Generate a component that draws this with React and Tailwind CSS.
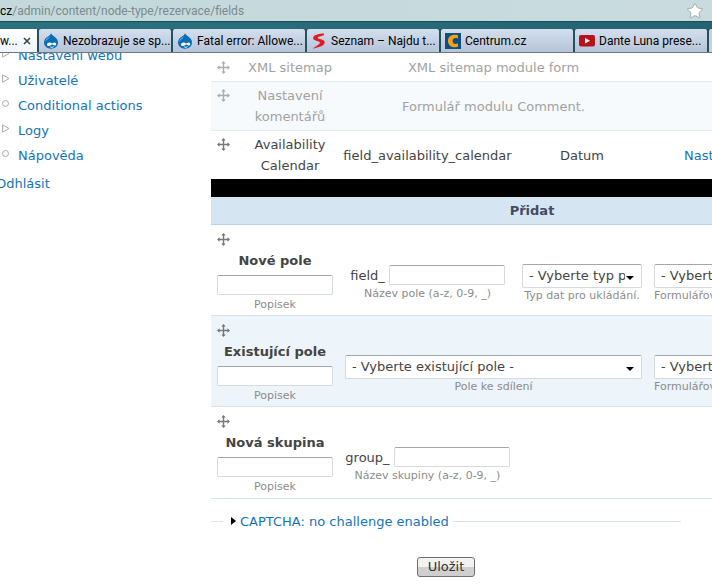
import React from "react";
import { Star } from "lucide-react";

function DrupalIcon() {
  return (
    <svg width="16" height="16" viewBox="0 0 16 16" className="shrink-0" aria-hidden="true">
      <path d="M8 0.3C8.6 1.8 10 2.6 11.6 3.8C13.6 5.3 15 7 15 9.5C15 13.3 11.9 15.7 8 15.7C4.1 15.7 1 13.2 1 9.5C1 7 2.6 5 4.6 3.8C6.2 2.8 7.6 1.9 8 0.3Z" fill="#0b6db5" />
      <path d="M5 4.6C3.2 5.8 2.3 7.2 2.4 8.6C3.4 7 5.6 5.6 7 3.4Z" fill="#5fb2e6" />
      <path d="M4 11.8C4 9.6 6.6 9 8.2 10C9.4 10.7 10.2 9.4 11.8 9.4C13.6 9.4 13.6 12.6 12 12.6C10.8 12.6 10.2 11.4 9.3 11.5C8.2 11.6 7.6 13 6 13C4.8 13 4 12.6 4 11.8Z" fill="#fff" />
      <path d="M7.2 13.8C8.4 14.6 9.8 14.4 10.6 13.6" stroke="#fff" strokeWidth="0.9" fill="none" />
    </svg>
  );
}

function SeznamIcon() {
  return (
    <svg width="16" height="16" viewBox="0 0 16 16" className="shrink-0" aria-hidden="true">
      <path d="M12.6 0.6C9 0.6 3 1.8 2.2 4.4C1.6 6.6 4.2 7.2 7 8.2C9.6 9.2 9.4 10 7.6 11.4C6 12.8 3.6 14 1.8 15.4C6 15 12.8 13.2 13.6 10C14.2 7.4 11.6 6.8 8.8 6C6.2 5.2 6.2 4.6 7.8 3.8C9.2 3.2 11.2 2.8 12.4 2.4C13.2 2 13.4 0.6 12.6 0.6Z" fill="#e01b22" />
    </svg>
  );
}

function CentrumIcon() {
  return (
    <svg width="16" height="16" viewBox="0 0 16 16" className="shrink-0" aria-hidden="true">
      <rect width="16" height="16" fill="#0f4f80" />
      <path d="M13 2.2C8 0.8 3 2.6 3 8C3 13.4 8 15.2 13 13.8V10.6C10 11.6 7.6 10.8 7.6 8C7.6 5.2 10 4.4 13 5.4Z" fill="#f4a118" />
    </svg>
  );
}

function YoutubeIcon() {
  return (
    <svg width="16" height="16" viewBox="0 0 16 16" className="shrink-0" aria-hidden="true">
      <rect y="2" width="16" height="11.5" rx="2" fill="#b5121b" />
      <path d="M6 5L11 7.8L6 10.6Z" fill="#fff" />
    </svg>
  );
}

function DragIcon({ faded }) {
  return (
    <svg
      width="13"
      height="13"
      viewBox="0 0 13 13"
      aria-hidden="true"
      className={faded ? "block shrink-0 opacity-60" : "block shrink-0"}
    >
      <path d="M6.5 1V12M1 6.5H12" stroke="#777" strokeWidth="1.4" />
      <path d="M6.5 0L8.7 2.6H4.3ZM6.5 13L8.7 10.4H4.3ZM0 6.5L2.6 4.3V8.7ZM13 6.5L10.4 4.3V8.7Z" fill="#777" />
    </svg>
  );
}

const tabs = [
  { title: "Nezobrazuje se sp...", Icon: DrupalIcon },
  { title: "Fatal error: Allowe...", Icon: DrupalIcon },
  { title: "Seznam – Najdu t...", Icon: SeznamIcon },
  { title: "Centrum.cz", Icon: CentrumIcon },
  { title: "Dante Luna prese...", Icon: YoutubeIcon },
];

function BrowserBar() {
  return (
    <header className="font-[Roboto,'Open_Sans',sans-serif] text-xs">
      <div className="flex h-[21px] items-center bg-linear-to-r from-[#c3d9db] to-[#c9dbde] text-[#7b8a8d]">
        <div className="flex-1 whitespace-nowrap">
          <span className="text-black">cz</span>/admin/content/node-type/rezervace/fields
        </div>
        <button type="button" aria-label="Oblíbené" className="mr-2">
          <Star size={18} strokeWidth={1} className="fill-white text-[#8d9a9d]" />
        </button>
      </div>
      <div className="h-2 border-t border-[#1c4c56] bg-linear-to-r from-[#2b717d] to-[#246371]" />
      <div className="flex h-6 gap-0.5 overflow-hidden border-b border-[#6b7880] bg-[#22525d]">
        <div className="flex w-[37px] shrink-0 items-center justify-between bg-linear-to-b from-white to-[#edf4fa] pr-1.5">
          <span>w...</span>
          <button type="button" aria-label="Zavřít kartu">
            <svg width="8" height="8" viewBox="0 0 8 8" className="block">
              <path d="M1 1L7 7M7 1L1 7" stroke="#444" strokeWidth="1.6" />
            </svg>
          </button>
        </div>
        {tabs.map(({ title, Icon }) => (
          <button
            key={title}
            type="button"
            className="flex w-[132px] shrink-0 items-center gap-1 rounded-t-xs bg-linear-to-b from-[#d3dfed] to-[#b6c4d8] pl-1 whitespace-nowrap text-black"
          >
            <Icon />
            {title}
          </button>
        ))}
        <div className="w-8 shrink-0 rounded-t-xs bg-[#c5d2e2]" />
      </div>
    </header>
  );
}

const menu = [
  { label: "Nastavení webu", branch: true },
  { label: "Uživatelé", branch: true },
  { label: "Conditional actions", branch: false },
  { label: "Logy", branch: true },
  { label: "Nápověda", branch: false },
];

function Sidebar() {
  return (
    <nav className="-mt-2 w-[211px] shrink-0 leading-[21px] text-[#1474b8]">
      <ul className="flex flex-col gap-1">
        {menu.map(({ label, branch }) => (
          <li key={label} className="flex gap-2 pl-0.5">
            <svg width="8" height="9" viewBox="0 0 8 9" className="mt-1 shrink-0" aria-hidden="true">
              {branch ? (
                <path d="M0.6 0.8L7 4.5L0.6 8.2Z" fill="none" stroke="#aaa" />
              ) : (
                <circle cx="3.5" cy="4.5" r="3" fill="none" stroke="#aaa" />
              )}
            </svg>
            <a href="#">{label}</a>
          </li>
        ))}
      </ul>
      <a href="#" className="mt-[7px] -ml-1 block">Odhlásit</a>
    </nav>
  );
}

function TextField({ id, label }) {
  return (
    <input
      id={id}
      aria-label={label}
      type="text"
      className="h-5 w-[116px] rounded-xs border border-[#d5dade] border-t-[#a3a6aa] bg-white px-1"
    />
  );
}

function Hint({ children }) {
  return <div className="text-[11px] leading-4 whitespace-nowrap text-[#8c8c8c]">{children}</div>;
}

function SelectField({ label, text }) {
  return (
    <div className="relative">
      <select
        aria-label={label}
        className="block h-6 w-full appearance-none rounded-xs border border-[#d5dade] border-t-[#a3a6aa] bg-white pr-4 pl-1.5"
      >
        <option>{text}</option>
      </select>
      <svg width="8" height="4" viewBox="0 0 8 4" className="pointer-events-none absolute top-3 right-2" aria-hidden="true">
        <path d="M0 0H8L4 4Z" fill="#000" />
      </svg>
    </div>
  );
}

function TitleCell({ faded, children }) {
  return (
    <td className="px-1.5 py-[3px] align-top">
      <div className="flex">
        <div className="mt-1 mr-[17px]">
          <DragIcon faded={faded} />
        </div>
        <div className="flex-1">{children}</div>
      </div>
    </td>
  );
}

function NewCell({ id, title }) {
  return (
    <td className="px-1.5 pt-2 pb-0.5 align-top">
      <DragIcon />
      <label htmlFor={id} className="mt-1 mb-1 block font-bold">{title}</label>
      <div className="flex flex-col items-center gap-0.5">
        <TextField id={id} label={title} />
        <Hint>Popisek</Hint>
      </div>
    </td>
  );
}

function NameCell({ prefix, id, hint }) {
  return (
    <td className="px-1.5 pt-10 align-top">
      <label htmlFor={id} className="flex items-center justify-center gap-1">
        {prefix}
        <TextField id={id} label={hint} />
      </label>
      <Hint>{hint}</Hint>
    </td>
  );
}

function SelectCell({ span, text, hint, left }) {
  return (
    <td
      colSpan={span}
      className={left ? "px-1.5 pt-[39px] text-left align-top" : "px-1.5 pt-[39px] align-top"}
    >
      <SelectField label={hint} text={text} />
      <Hint>{hint}</Hint>
    </td>
  );
}

function FieldsTable() {
  return (
    <table className="mt-px w-[642px] table-fixed border-collapse text-center leading-[21px] text-[#444]">
      <colgroup>
        <col className="w-32" />
        <col className="w-[177px]" />
        <col className="w-[132px]" />
        <col />
      </colgroup>
      <tbody>
        <tr className="border-b border-[#e2edf3] text-[#a2a2a2]">
          <TitleCell faded>XML sitemap</TitleCell>
          <td colSpan={2}>XML sitemap module form</td>
          <td />
        </tr>
        <tr className="border-b border-[#e2edf3] bg-[#f6fafd] text-[#a2a2a2]">
          <TitleCell faded>Nastavení komentářů</TitleCell>
          <td colSpan={2}>Formulář modulu Comment.</td>
          <td />
        </tr>
        <tr>
          <TitleCell>Availability Calendar</TitleCell>
          <td>field_availability_calendar</td>
          <td>Datum</td>
          <td className="pl-9 text-left">
            <a href="#" className="text-[#1474b8]">Nastavit</a>
          </td>
        </tr>
        <tr className="h-[18px] bg-black">
          <td colSpan={4} />
        </tr>
        <tr className="h-[27px] border-b border-[#b9d4e4] bg-[#d5e6f2] text-[#454b63]">
          <th colSpan={4}>Přidat</th>
        </tr>
        <tr className="h-[91px] border-b border-[#d3e4ee]">
          <NewCell id="new-field" title="Nové pole" />
          <NameCell prefix="field_" id="field-name" hint="Název pole (a-z, 0-9, _)" />
          <SelectCell text="- Vyberte typ pole -" hint="Typ dat pro ukládání." />
          <SelectCell left text="- Vyberte prvek -" hint="Formulářový prvek pro editaci." />
        </tr>
        <tr className="h-[91px] border-b border-[#d3e4ee] bg-[#edf4fa]">
          <NewCell id="existing-field" title="Existující pole" />
          <SelectCell span={2} text="- Vyberte existující pole -" hint="Pole ke sdílení" />
          <SelectCell left text="- Vyberte prvek -" hint="Formulářový prvek pro editaci." />
        </tr>
        <tr className="h-[92px] border-b border-[#d3e4ee]">
          <NewCell id="new-group" title="Nová skupina" />
          <NameCell prefix="group_" id="group-name" hint="Název skupiny (a-z, 0-9, _)" />
          <td />
          <td />
        </tr>
      </tbody>
    </table>
  );
}

export default function App() {
  return (
    <div className="min-h-screen overflow-hidden bg-white font-['DejaVu_Sans',sans-serif] text-[13px]">
      <BrowserBar />
      <div className="flex overflow-hidden">
        <Sidebar />
        <main className="w-[470px] shrink-0">
          <FieldsTable />
          <fieldset className="mt-3 border-t border-[#dbe6ec]">
            <legend className="ml-3 pr-1 pl-2 leading-[21px]">
              <button type="button" className="flex items-center gap-1 text-[#1474b8]">
                <svg width="5" height="8" viewBox="0 0 5 8" aria-hidden="true">
                  <path d="M0 0L5 4L0 8Z" fill="#000" />
                </svg>
                CAPTCHA: no challenge enabled
              </button>
            </legend>
          </fieldset>
          <div className="mt-[25px] mb-2 flex justify-center">
            <button
              type="submit"
              className="h-5 rounded-[3px] border border-[#707070] bg-linear-to-b from-[#f2f2f2] from-50% to-[#cfcfcf] to-50% px-2.5 leading-[18px] text-[#333]"
            >
              Uložit
            </button>
          </div>
        </main>
      </div>
    </div>
  );
}
